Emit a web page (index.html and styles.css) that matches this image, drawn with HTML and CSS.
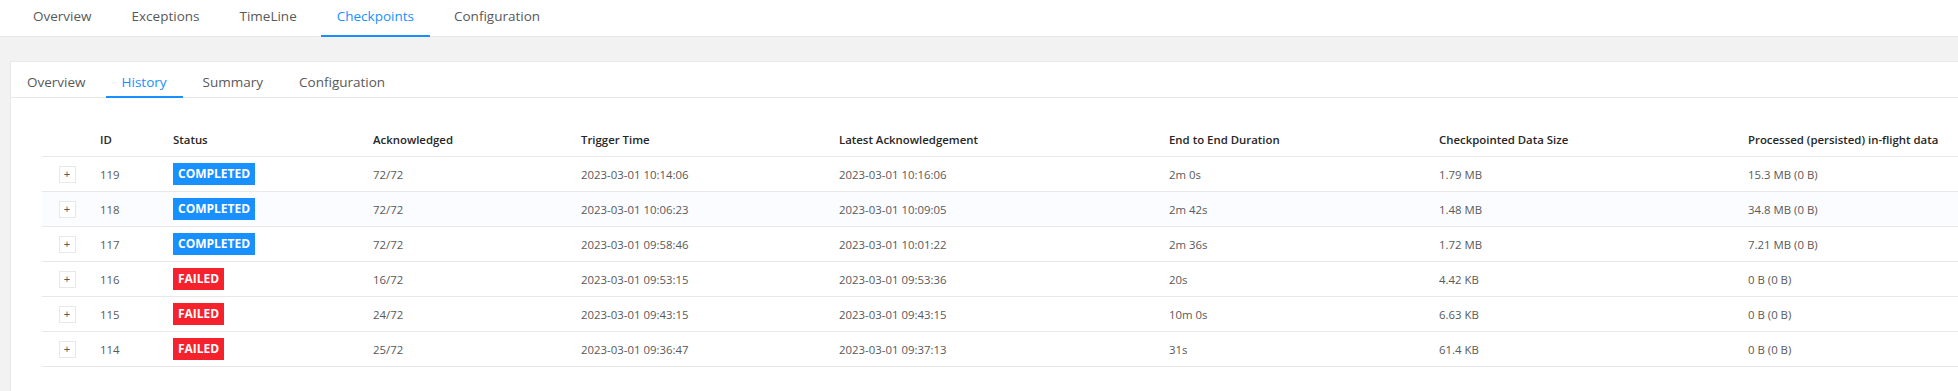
FILE: index.html
```html
<!DOCTYPE html>
<html lang="en">
<head>
  <meta charset="UTF-8" />
  <meta name="viewport" content="width=device-width, initial-scale=1.0"/>
  <title>Checkpoints - History</title>
  <link rel="stylesheet" href="styles.css">
</head>
<body>
  <nav class="job-tabs">
    <a class="tab">Overview</a>
    <a class="tab">Exceptions</a>
    <a class="tab">TimeLine</a>
    <a class="tab active">Checkpoints</a>
    <a class="tab">Configuration</a>
  </nav>

  <div class="content">
    <div class="card">
      <div class="card-tabs">
        <a class="tab">Overview</a>
        <a class="tab active">History</a>
        <a class="tab">Summary</a>
        <a class="tab">Configuration</a>
      </div>

      <div class="card-body">
        <table class="history">
          <colgroup>
            <col class="c-expand">
            <col class="c-id">
            <col class="c-status">
            <col class="c-ack">
            <col class="c-trigger">
            <col class="c-latest">
            <col class="c-duration">
            <col class="c-size">
            <col class="c-inflight">
          </colgroup>
          <thead>
            <tr>
              <th></th>
              <th>ID</th>
              <th>Status</th>
              <th>Acknowledged</th>
              <th>Trigger Time</th>
              <th>Latest Acknowledgement</th>
              <th>End to End Duration</th>
              <th>Checkpointed Data Size</th>
              <th>Processed (persisted) in-flight data</th>
            </tr>
          </thead>
          <tbody>
            <tr>
              <td><span class="expand">+</span></td>
              <td>119</td>
              <td><span class="badge completed">COMPLETED</span></td>
              <td>72/72</td>
              <td>2023-03-01 10:14:06</td>
              <td>2023-03-01 10:16:06</td>
              <td>2m 0s</td>
              <td>1.79 MB</td>
              <td>15.3 MB (0 B)</td>
            </tr>
            <tr class="hover">
              <td><span class="expand">+</span></td>
              <td>118</td>
              <td><span class="badge completed">COMPLETED</span></td>
              <td>72/72</td>
              <td>2023-03-01 10:06:23</td>
              <td>2023-03-01 10:09:05</td>
              <td>2m 42s</td>
              <td>1.48 MB</td>
              <td>34.8 MB (0 B)</td>
            </tr>
            <tr>
              <td><span class="expand">+</span></td>
              <td>117</td>
              <td><span class="badge completed">COMPLETED</span></td>
              <td>72/72</td>
              <td>2023-03-01 09:58:46</td>
              <td>2023-03-01 10:01:22</td>
              <td>2m 36s</td>
              <td>1.72 MB</td>
              <td>7.21 MB (0 B)</td>
            </tr>
            <tr>
              <td><span class="expand">+</span></td>
              <td>116</td>
              <td><span class="badge failed">FAILED</span></td>
              <td>16/72</td>
              <td>2023-03-01 09:53:15</td>
              <td>2023-03-01 09:53:36</td>
              <td>20s</td>
              <td>4.42 KB</td>
              <td>0 B (0 B)</td>
            </tr>
            <tr>
              <td><span class="expand">+</span></td>
              <td>115</td>
              <td><span class="badge failed">FAILED</span></td>
              <td>24/72</td>
              <td>2023-03-01 09:43:15</td>
              <td>2023-03-01 09:43:15</td>
              <td>10m 0s</td>
              <td>6.63 KB</td>
              <td>0 B (0 B)</td>
            </tr>
            <tr>
              <td><span class="expand">+</span></td>
              <td>114</td>
              <td><span class="badge failed">FAILED</span></td>
              <td>25/72</td>
              <td>2023-03-01 09:36:47</td>
              <td>2023-03-01 09:37:13</td>
              <td>31s</td>
              <td>61.4 KB</td>
              <td>0 B (0 B)</td>
            </tr>
          </tbody>
        </table>
      </div>
    </div>
  </div>
</body>
</html>
```

FILE: styles.css
```css
body {
  margin: 0;
  padding: 0;
  font-family: 'Open Sans', 'Noto Sans', sans-serif;
  background: #f2f2f2;
  color: #595959;
  overflow: hidden;
}

a {
  cursor: pointer;
}

.job-tabs {
  display: flex;
  gap: 8px;
  height: 36px;
  padding-left: 17px;
  background: white;
  border-bottom: 1px solid #e8e8e8;
}

.tab {
  box-sizing: border-box;
  padding: 0 16px;
  font-size: 13.5px;
  color: #595959;
  white-space: nowrap;
  border-bottom: 2px solid transparent;
}

.job-tabs .tab {
  height: 37px;
  line-height: 32px;
  margin-bottom: -1px;
}

.tab.active {
  color: #1890ff;
  border-bottom-color: #1890ff;
}

.content {
  padding: 24px 0 0 10px;
}

.card {
  width: 2100px;
  height: 400px;
  background: white;
  border: 1px solid #e8e8e8;
}

.card-tabs {
  display: flex;
  gap: 4px;
  height: 35px;
  border-bottom: 1px solid #e8e8e8;
}

.card-tabs .tab {
  height: 36px;
  padding-top: 7px;
  line-height: 27px;
  margin-bottom: -1px;
}

.card-body {
  padding: 24px 0 0 31px;
}

.history {
  table-layout: fixed;
  border-collapse: collapse;
  width: 1998px;
  font-size: 11.4px;
}

.c-expand { width: 50px; }
.c-id { width: 73px; }
.c-status { width: 200px; }
.c-ack { width: 208px; }
.c-trigger { width: 258px; }
.c-latest { width: 330px; }
.c-duration { width: 270px; }
.c-size { width: 309px; }
.c-inflight { width: 300px; }

.history th,
.history td {
  height: 34px;
  padding: 0 8px;
  text-align: left;
  white-space: nowrap;
  border-bottom: 1px solid #e8e8e8;
}

.history th {
  color: #262626;
  font-weight: 600;
}

.history td:first-child {
  text-align: center;
}

.history tr.hover td {
  background: #fafcff;
}

.expand {
  display: inline-block;
  box-sizing: border-box;
  width: 17px;
  height: 17px;
  border: 1px solid #e8e8e8;
  background: white;
  font-family: 'Liberation Sans', sans-serif;
  font-size: 11px;
  line-height: 14px;
  color: #595959;
  vertical-align: middle;
}

.badge {
  display: inline-block;
  height: 22px;
  line-height: 22px;
  padding: 0 5px;
  font-size: 12px;
  font-weight: 700;
  color: white;
  vertical-align: middle;
}

.badge.completed {
  background: #1890ff;
}

.badge.failed {
  background: #f5222d;
}
```
